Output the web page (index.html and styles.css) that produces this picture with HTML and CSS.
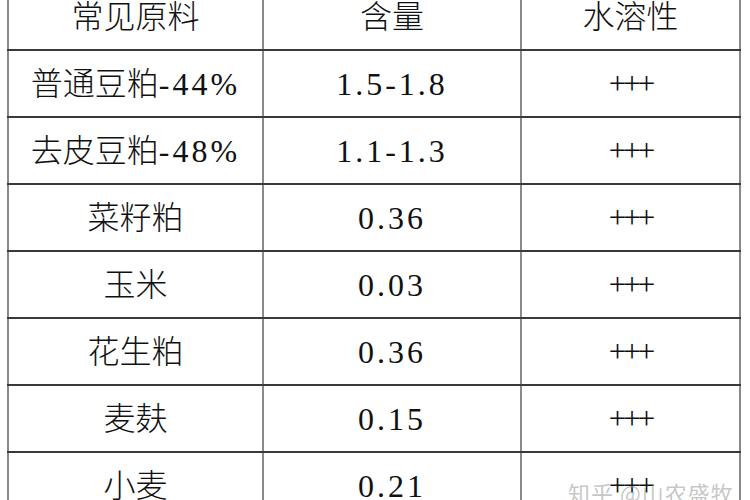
FILE: index.html
```html
<!DOCTYPE html>
<html lang="zh-CN">
<head>
<meta charset="utf-8">
<link rel="stylesheet" href="styles.css">
</head>
<body>
<div class="page">
<table class="sheet">
  <colgroup>
    <col class="c1"><col class="c2"><col class="c3">
  </colgroup>
  <tr class="head"><td>常见原料</td><td>含量</td><td>水溶性</td></tr>
  <tr><td>普通豆粕<span class="num">-44%</span></td><td class="num">1.5-1.8</td><td class="plus">+++</td></tr>
  <tr><td>去皮豆粕<span class="num">-48%</span></td><td class="num">1.1-1.3</td><td class="plus">+++</td></tr>
  <tr><td>菜籽粕</td><td class="num">0.36</td><td class="plus">+++</td></tr>
  <tr><td>玉米</td><td class="num">0.03</td><td class="plus">+++</td></tr>
  <tr><td>花生粕</td><td class="num">0.36</td><td class="plus">+++</td></tr>
  <tr><td>麦麸</td><td class="num">0.15</td><td class="plus">+++</td></tr>
  <tr><td>小麦</td><td class="num">0.21</td><td class="plus">+++</td></tr>
</table>
<div class="mark">知乎 @山农盛牧</div>
</div>
</body>
</html>
```
FILE: styles.css
```css
html, body {
  margin: 0;
  padding: 0;
  background: #fff;
}
.page {
  position: relative;
  width: 750px;
  height: 500px;
  overflow: hidden;
}
.sheet {
  margin: -18px 0 0 7px;
  border-collapse: collapse;
  table-layout: fixed;
  width: 734px;
  font-family: "Liberation Serif", "Noto Sans CJK SC", serif;
  font-size: 32px;
  color: #111;
}
.c1 { width: 255px; }
.c2 { width: 258px; }
.c3 { width: 219px; }
.sheet td {
  height: 65px;
  padding: 0;
  text-align: center;
  vertical-align: middle;
  border-left: 2px solid #8a8a8a;
  border-right: 2px solid #8a8a8a;
  border-top: 2px solid #3a3a3a;
  border-bottom: 2px solid #3a3a3a;
  font-weight: 300;
  line-height: 1;
}
.num {
  font-family: "Liberation Serif", serif;
  letter-spacing: 3px;
  font-weight: 400;
}
.sheet td.num { font-weight: 400; }
.sheet td.plus {
  font-family: "Liberation Serif", serif;
  font-size: 31px;
  letter-spacing: -3px;
  font-weight: 400;
}
.mark {
  position: absolute;
  left: 568px;
  top: 476px;
  font-family: "Noto Sans CJK SC", sans-serif;
  font-size: 22px;
  color: rgba(150, 150, 150, 0.55);
  letter-spacing: 1px;
}
```
